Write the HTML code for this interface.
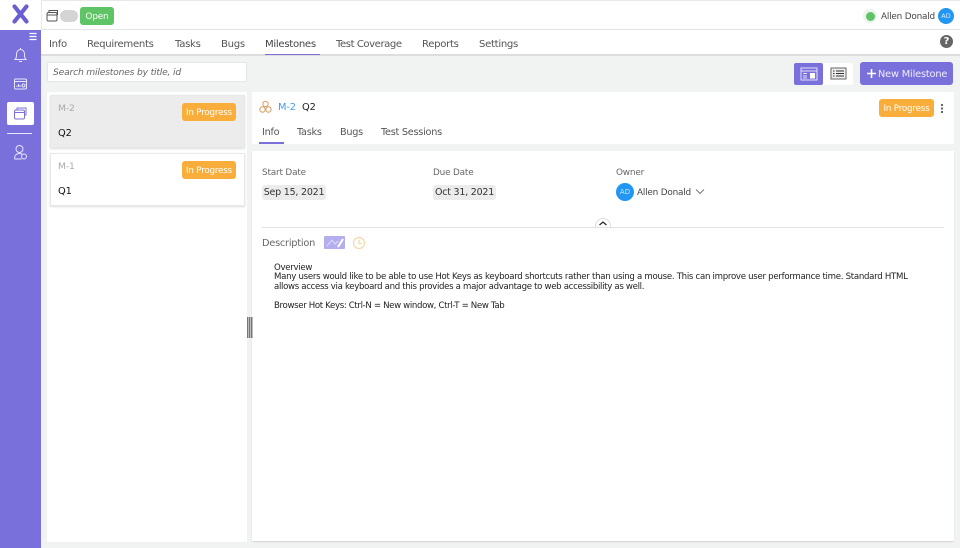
<!DOCTYPE html>
<html><head><meta charset="utf-8"><style>
html,body{margin:0;padding:0}
body{width:960px;height:548px;overflow:hidden;position:relative;background:#f1f2f2;font-family:"DejaVu Sans","Liberation Sans",sans-serif;color:#333}
div,svg{position:absolute}
.t{white-space:nowrap;line-height:12px}
.tab{font-size:10.1px;letter-spacing:-.3px;color:#555;top:39px}
.sub{font-size:9.7px;letter-spacing:-.25px;color:#555;top:127px}
.badge{background:#f9ae3c;color:#fff;border-radius:3px;font-size:8.7px;letter-spacing:-.17px;text-align:center;height:18px;line-height:20px;white-space:nowrap}
.card{left:50px;width:193px;height:51px;border:1px solid #e8e8e8;box-shadow:0 1px 2px rgba(0,0,0,.14)}
.lbl{font-size:8.9px;letter-spacing:-.18px;color:#666}
.chip{background:#ececec;border-radius:3px;font-size:9.5px;letter-spacing:-.22px;color:#333;line-height:15px;height:15px;text-align:center;white-space:nowrap}
</style></head><body>
<div style="left:0;top:0;width:960px;height:30px;background:#fff;border-top:1px solid #e8e8e8;box-sizing:border-box;border-bottom:1px solid #e4e4e4"></div>
<div style="left:0;top:30px;width:41px;height:518px;background:#7a70dc"></div>
<div style="left:0;top:0;width:41px;height:30px;background:#fff;border-right:1px solid #e8e8e8"></div>
<svg style="left:12px;top:4px" width="17" height="20" viewBox="0 0 17 20"><path d="M2.500 2.500 L14.500 17.500 M14.500 2.500 L2.500 17.500" stroke="#6a5fd0" stroke-width="4.200" stroke-linecap="round"/></svg>
<svg style="left:46px;top:9px" width="13" height="13" viewBox="0 0 13 13" fill="none" stroke="#555" stroke-width="1"><rect x="1" y="3.500" width="10" height="8.500" rx="1.500" fill="#fff"/><path d="M3 3.500V1.500h8.500V6"/><path d="M1 6h10"/></svg>
<div style="left:60px;top:10px;width:18px;height:12px;border-radius:6px;background:#d4d4d4"></div>
<div style="left:80px;top:7px;width:34px;height:18px;background:#5fc465;border-radius:3px;color:#fff;font-size:8.800px;letter-spacing:-.15px;line-height:20px;text-align:center">Open</div>
<div style="left:863px;top:9px;width:14px;height:14px;border-radius:7px;background:#eef3ee"></div>
<div style="left:866px;top:12px;width:9px;height:9px;border-radius:5px;background:#5fc465"></div>
<div class="t" style="left:881px;top:11px;font-size:8.900px;letter-spacing:-.2px;color:#444">Allen Donald</div>
<div style="left:938px;top:8px;width:16px;height:16px;border-radius:8px;background:#2196f3;color:#dcefff;font-size:6.500px;line-height:16px;text-align:center">AD</div>

<div style="left:41px;top:30px;width:919px;height:26px;background:#fff;border-bottom:2px solid #ddd;box-sizing:border-box"></div>
<div class="t tab" style="left:49px">Info</div>
<div class="t tab" style="left:87px">Requirements</div>
<div class="t tab" style="left:175px">Tasks</div>
<div class="t tab" style="left:221px">Bugs</div>
<div class="t tab" style="left:265px;color:#444">Milestones</div>
<div style="left:265px;top:53.500px;width:55px;height:1.500px;background:#7a70dc"></div>
<div class="t tab" style="left:336px;letter-spacing:-.45px">Test Coverage</div>
<div class="t tab" style="left:422px">Reports</div>
<div class="t tab" style="left:479px">Settings</div>
<div style="left:940px;top:35px;width:13px;height:13px;border-radius:7px;background:#666;color:#fff;font-size:10px;font-weight:bold;line-height:13px;text-align:center">?</div>

<svg style="left:28px;top:32px" width="10" height="9" viewBox="0 0 10 9"><path d="M1.500 1.500h7M1.500 4.500h7M1.500 7.500h7" stroke="#fff" stroke-width="1.200"/></svg>
<svg style="left:13px;top:47px" width="15" height="16" viewBox="0 0 15 16" fill="none" stroke="#e8e6fa" stroke-width="1"><path d="M2 12.500c1.500-1.500 1.500-3 1.500-5.500 0-2.500 1.800-4.500 4-4.500s4 2 4 4.500c0 2.500 0 4 1.500 5.500z"/><path d="M7.500 1v1.500M6 14.500h3"/></svg>
<svg style="left:13px;top:77px" width="15" height="14" viewBox="0 0 15 14" fill="none" stroke="#e8e6fa" stroke-width="1"><rect x="1.500" y="2" width="12" height="10" rx="1"/><path d="M1.500 4.500h12"/><path d="M4 10V8.500M5.500 10V7M7 10V8"/><circle cx="10.500" cy="8.500" r="1.500"/></svg>
<div style="left:7px;top:102px;width:27px;height:23px;background:#fff;border-radius:2px"></div>
<svg style="left:13px;top:106px" width="15" height="15" viewBox="0 0 15 15" fill="none" stroke="#7a70dc" stroke-width="1"><rect x="1.500" y="4" width="10" height="9" rx="1.500"/><path d="M4 4V2h9v7h-1.500"/><path d="M1.500 6.500h10"/></svg>
<div style="left:7px;top:133px;width:25px;height:1px;background:#e9e7f5"></div>
<svg style="left:13px;top:144px" width="15" height="17" viewBox="0 0 15 17" fill="none" stroke="#e8e6fa" stroke-width="1"><circle cx="6.500" cy="5" r="3.500"/><path d="M1.500 15c0-3.500 2-5.500 5-5.500 1.500 0 2.500.5 3 1M1.500 15h7"/><circle cx="11" cy="12.500" r="2.500"/></svg>

<div style="left:47px;top:62px;width:200px;height:20px;background:#fff;border:1px solid #e6e6e6;box-sizing:border-box;border-radius:2px"></div>
<div class="t" style="left:53px;top:66.500px;font-size:9.200px;letter-spacing:-.2px;font-style:italic;color:#666">Search milestones by title, id</div>

<div style="left:47px;top:92px;width:200px;height:450px;background:#fff"></div>
<div class="card" style="top:95px;background:#ececec"></div>
<div class="t" style="left:58px;top:103px;font-size:9.200px;letter-spacing:-.1px;color:#aaa">M-2</div>
<div class="t" style="left:58px;top:128px;font-size:9.800px;letter-spacing:-.1px;color:#111">Q2</div>
<div class="badge" style="left:182px;top:103px;width:54px">In Progress</div>
<div class="card" style="top:153px;background:#fff"></div>
<div class="t" style="left:58px;top:161px;font-size:9.200px;letter-spacing:-.1px;color:#aaa">M-1</div>
<div class="t" style="left:58px;top:186px;font-size:9.800px;letter-spacing:-.1px;color:#111">Q1</div>
<div class="badge" style="left:182px;top:161px;width:54px">In Progress</div>

<div style="left:794px;top:63px;width:59px;height:22px;background:#fff;border-radius:2px"></div>
<div style="left:794px;top:63px;width:29px;height:22px;background:#7a70dc;border-radius:2px"></div>
<svg style="left:800px;top:67px" width="18" height="14" viewBox="0 0 18 14" fill="none" stroke="#e3e0fa" stroke-width="1"><rect x="1" y="1" width="16" height="12"/><path d="M1 4h16M3 6.500h4M3 9h4M3 11h4"/><rect x="10" y="6" width="5" height="5.500" fill="#fff" stroke="none"/></svg>
<svg style="left:830px;top:67px" width="17" height="13" viewBox="0 0 17 13" fill="none" stroke="#666" stroke-width="1"><rect x="1" y="1" width="15" height="11" fill="#eee"/><path d="M3 4h1.500M6 4h8M3 6.500h1.500M6 6.500h8M3 9h1.500M6 9h8" stroke="#333"/></svg>
<div style="left:860px;top:62px;width:93px;height:23px;background:#7a70dc;border-radius:3px"></div>
<svg style="left:866px;top:68px" width="11" height="11" viewBox="0 0 11 11"><path d="M5.500 1v9M1 5.500h9" stroke="#fff" stroke-width="1.600"/></svg>
<div class="t" style="left:878px;top:68.500px;font-size:9.800px;letter-spacing:-.18px;color:#f0eefc">New Milestone</div>

<div style="left:252px;top:92px;width:702px;height:52px;background:#fff"></div>
<div style="left:252px;top:151px;width:702px;height:390px;background:#fff;box-shadow:0 1px 1px rgba(0,0,0,.12)"></div>
<svg style="left:259px;top:100px" width="13" height="14" viewBox="0 0 13 14" fill="none" stroke="#d9a066" stroke-width="1"><circle cx="6.500" cy="4" r="2.700"/><circle cx="3.500" cy="9.500" r="2.700"/><circle cx="9.500" cy="9.500" r="2.700"/></svg>
<div class="t" style="left:278px;top:102px;font-size:9.800px;letter-spacing:-.15px;color:#3f9bf0">M-2</div>
<div class="t" style="left:302px;top:102px;font-size:9.800px;letter-spacing:-.1px;color:#222">Q2</div>
<div class="badge" style="left:879px;top:99px;width:55px">In Progress</div>
<div style="left:941px;top:104px;width:2px;height:2px;background:#666;box-shadow:0 3.500px 0 #666,0 7px 0 #666"></div>
<div class="t sub" style="left:262px">Info</div>
<div style="left:259px;top:142px;width:25px;height:1.500px;background:#7a70dc"></div>
<div class="t sub" style="left:297px">Tasks</div>
<div class="t sub" style="left:340px">Bugs</div>
<div class="t sub" style="left:381px">Test Sessions</div>

<div class="t lbl" style="left:262px;top:167px">Start Date</div>
<div class="t lbl" style="left:433px;top:167px">Due Date</div>
<div class="t lbl" style="left:616px;top:167px">Owner</div>
<div class="chip" style="left:262px;top:185px;width:64px;line-height:16px">Sep 15, 2021</div>
<div class="chip" style="left:433px;top:185px;width:63px;line-height:16px">Oct 31, 2021</div>
<div style="left:616px;top:183px;width:18px;height:18px;border-radius:9px;background:#2196f3;color:#cfe7ff;font-size:7px;line-height:18px;text-align:center">AD</div>
<div class="t" style="left:637px;top:186.500px;font-size:8.900px;letter-spacing:-.2px;color:#444">Allen Donald</div>
<svg style="left:695px;top:188px" width="10" height="7" viewBox="0 0 10 7"><path d="M1 1.500l4 4 4-4" fill="none" stroke="#777" stroke-width="1"/></svg>

<div style="left:262px;top:227px;width:682px;height:1px;background:#e4e2de"></div>
<div style="left:595px;top:218px;width:16px;height:9px;background:#fff;border:1px solid #ddd;border-bottom:0;border-radius:9px 9px 0 0;box-sizing:border-box"></div>
<svg style="left:598px;top:220px" width="10" height="7" viewBox="0 0 10 7"><path d="M1.500 5l3.500-3 3.500 3" fill="none" stroke="#222" stroke-width="1.200"/></svg>

<div class="t" style="left:262px;top:238px;font-size:9.800px;letter-spacing:-.25px;color:#666">Description</div>
<div style="left:324px;top:236px;width:21px;height:13px;background:#b5aeee;border-radius:1px"></div>
<svg style="left:324px;top:236px" width="21" height="13" viewBox="0 0 21 13"><path d="M3 10l5-6 3 4 3-3" fill="none" stroke="#dedbfa" stroke-width="1"/><path d="M14 11l5-8" stroke="#fff" stroke-width="2"/></svg>
<svg style="left:352px;top:236px" width="14" height="14" viewBox="0 0 14 14" fill="none" stroke="#f5d9a8" stroke-width="1.200"><circle cx="7" cy="7" r="5.500"/><path d="M7 3.500V7.500H10"/></svg>

<div class="t" style="left:274px;top:264px;font-size:8.600px;line-height:9.450px;color:#222;letter-spacing:-.29px">Overview<br>Many users would like to be able to use Hot Keys as keyboard shortcuts rather than using a mouse. This can improve user performance time. Standard HTML<br><span style="letter-spacing:-.32px">allows access via keyboard and this provides a major advantage to web accessibility as well.</span><br><br><span style="letter-spacing:-.35px">Browser Hot Keys: Ctrl-N = New window, Ctrl-T = New Tab</span></div>

<div style="left:247px;top:317px;width:6px;height:21px;background:repeating-linear-gradient(90deg,#777 0,#777 1px,#bbb 1px,#bbb 2px)"></div>
</body></html>
